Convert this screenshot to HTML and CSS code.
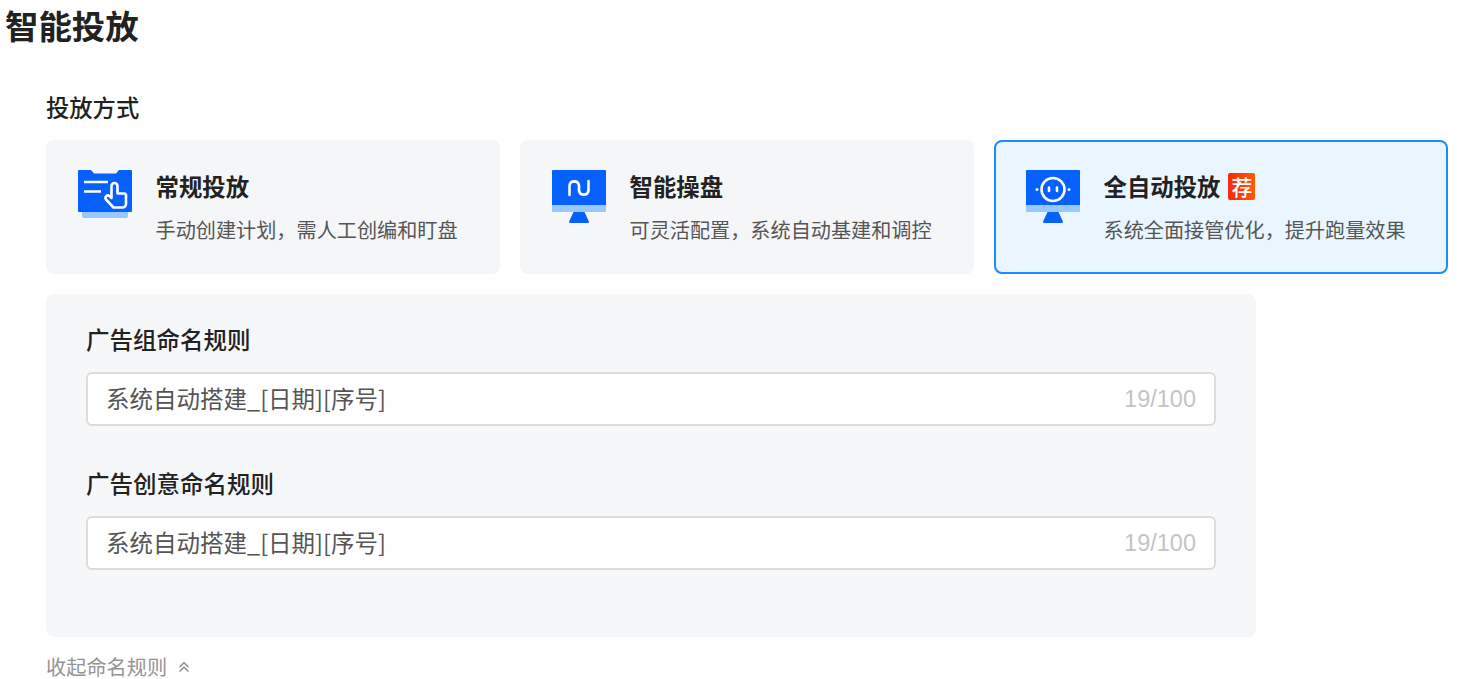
FILE: index.html
```html
<!DOCTYPE html>
<html lang="zh-CN">
<head>
<meta charset="utf-8">
<title>智能投放</title>
<link rel="stylesheet" href="styles.css">
</head>
<body>
<h1 class="page-title">智能投放</h1>
<main class="section">
  <h2 class="section-label">投放方式</h2>
  <div class="cards">
    <div class="card">
      <svg class="card-icon" viewBox="0 0 54 54">
        <path fill="#99c7ff" d="M4 40h46v6a2 2 0 0 1-2 2H6a2 2 0 0 1-2-2z"/>
        <path fill="#0560fd" d="M1 0h12l3 3.400h22L41 0h12a1 1 0 0 1 1 1v40a1 1 0 0 1-1 1H1a1 1 0 0 1-1-1V1a1 1 0 0 1 1-1z"/>
        <path fill="none" stroke="#fff" stroke-width="2.600" d="M6 12h24M6 21.500h17"/>
        <path fill="#0560fd" stroke="#fff" stroke-width="2.600" stroke-linejoin="round" d="M35.500 37.500h9a3.500 3.500 0 0 0 3.500-3.500V25.500a2 2 0 0 0-2-2h-6.500V16a3 3 0 0 0-6 0v12l-2-2a2.500 2.500 0 0 0-3.500 3.500z"/>
      </svg>
      <div class="card-body">
        <div class="card-title">常规投放</div>
        <div class="card-desc">手动创建计划，需人工创编和盯盘</div>
      </div>
    </div>
    <div class="card">
      <svg class="card-icon" viewBox="0 0 54 54">
        <path fill="#0560fd" d="M1 0h52a1 1 0 0 1 1 1v34H0V1a1 1 0 0 1 1-1z"/>
        <path fill="#99c7ff" d="M0 35h54v6a1 1 0 0 1-1 1H1a1 1 0 0 1-1-1z"/>
        <path fill="#0560fd" d="M21.500 42h11l4.300 9.300a1.200 1.200 0 0 1-1.100 1.700H18.300a1.200 1.200 0 0 1-1.100-1.700z"/>
        <path fill="none" stroke="#fff" stroke-width="2.600" stroke-linecap="round" d="M17.500 25v-9.500a4.800 4.800 0 0 1 9.500 0v5a4.800 4.800 0 0 0 9.500 0V11"/>
      </svg>
      <div class="card-body">
        <div class="card-title">智能操盘</div>
        <div class="card-desc">可灵活配置，系统自动基建和调控</div>
      </div>
    </div>
    <div class="card card-active">
      <svg class="card-icon" viewBox="0 0 54 54">
        <path fill="#0560fd" d="M1 0h52a1 1 0 0 1 1 1v34H0V1a1 1 0 0 1 1-1z"/>
        <path fill="#99c7ff" d="M0 35h54v6a1 1 0 0 1-1 1H1a1 1 0 0 1-1-1z"/>
        <path fill="#0560fd" d="M21.500 42h11l4.300 9.300a1.200 1.200 0 0 1-1.100 1.700H18.300a1.200 1.200 0 0 1-1.100-1.700z"/>
        <circle cx="27" cy="19.500" r="11.500" fill="none" stroke="#fff" stroke-width="2.600"/>
        <path fill="none" stroke="#fff" stroke-width="2.600" stroke-linecap="round" d="M23 17.500v3.500M31 17.500v3.500"/>
        <circle cx="11" cy="19.500" r="1.500" fill="#fff"/>
        <circle cx="43" cy="19.500" r="1.500" fill="#fff"/>
      </svg>
      <div class="card-body">
        <div class="card-title">全自动投放<span class="badge">荐</span></div>
        <div class="card-desc">系统全面接管优化，提升跑量效果</div>
      </div>
    </div>
  </div>
  <div class="panel">
    <div class="field">
      <label class="field-label">广告组命名规则</label>
      <div class="input"><span class="input-text">系统自动搭建_[日期][序号]</span><span class="count">19/100</span></div>
    </div>
    <div class="field">
      <label class="field-label">广告创意命名规则</label>
      <div class="input"><span class="input-text">系统自动搭建_[日期][序号]</span><span class="count">19/100</span></div>
    </div>
  </div>
  <div class="collapse">收起命名规则
    <svg class="collapse-icon" viewBox="0 0 12 12"><path fill="none" stroke="#8c8c8c" stroke-width="1.400" d="M1.500 6 6 1.800 10.500 6M1.500 10.500 6 6.300l4.500 4.200"/></svg>
  </div>
</main>
</body>
</html>
```

FILE: styles.css
```css
* { box-sizing: border-box; }
html, body { margin: 0; padding: 0; }
body {
  background: #fff;
  color: #222;
  font-family: "Noto Sans CJK SC", "Noto Sans", sans-serif;
  height: 679px;
  overflow: hidden;
}
.page-title {
  margin: 0;
  padding: 0 0 4px 5px;
  font-size: 33.4px;
  line-height: 50px;
  font-weight: 600;
}
.section { padding: 38px 15px 0 46px; }
.section-label {
  margin: 0 0 18px;
  font-size: 23.3px;
  line-height: 30px;
  font-weight: 500;
}
.cards { display: flex; gap: 20px; }
.card {
  flex: 0 0 454px;
  height: 134px;
  display: flex;
  align-items: flex-start;
  gap: 24px;
  padding: 30px 0 0 32px;
  background: #f5f6f8;
  border-radius: 8px;
}
.card-active {
  background: #e9f5ff;
  border: 2px solid #1a8cff;
  padding: 28px 0 0 30px;
}
.card-icon { width: 54px; height: 54px; flex: none; }
.card-body { display: flex; flex-direction: column; margin-left: -0.5px; }
.card-title {
  display: flex;
  align-items: center;
  font-size: 23.4px;
  line-height: 32px;
  font-weight: 600;
}
.card-desc {
  margin-top: 11px;
  font-size: 20.15px;
  line-height: 34px;
  color: #555;
}
.badge {
  width: 27px;
  height: 27px;
  margin-left: 8px;
  border-radius: 2px;
  background: linear-gradient(90deg, #f22c0c, #ff5a00);
  color: #fff;
  font-size: 21px;
  line-height: 27px;
  font-weight: 500;
  text-align: center;
}
.panel {
  width: 1210px;
  height: 343px;
  margin-top: 20px;
  padding: 30px 40px 0;
  background: #f6f7f9;
  border-radius: 8px;
}
.field + .field { margin-top: 42px; }
.field-label {
  display: block;
  margin-bottom: 18px;
  font-size: 23.5px;
  line-height: 30px;
  font-weight: 500;
}
.input {
  height: 54px;
  display: flex;
  align-items: center;
  justify-content: space-between;
  padding: 0 18px;
  background: #fff;
  border: 2px solid #dcdcdc;
  border-radius: 6px;
  font-size: 23.5px;
  color: #555;
}
.input-text { margin-bottom: 2px; }
.count {
  font-family: "Liberation Sans", sans-serif;
  font-size: 23.5px;
  color: #c4c4c4;
}
.collapse {
  display: flex;
  align-items: center;
  gap: 11px;
  margin-top: 14px;
  font-size: 20.2px;
  line-height: 32px;
  color: #949494;
}
.collapse-icon { width: 12px; height: 12px; }
```
